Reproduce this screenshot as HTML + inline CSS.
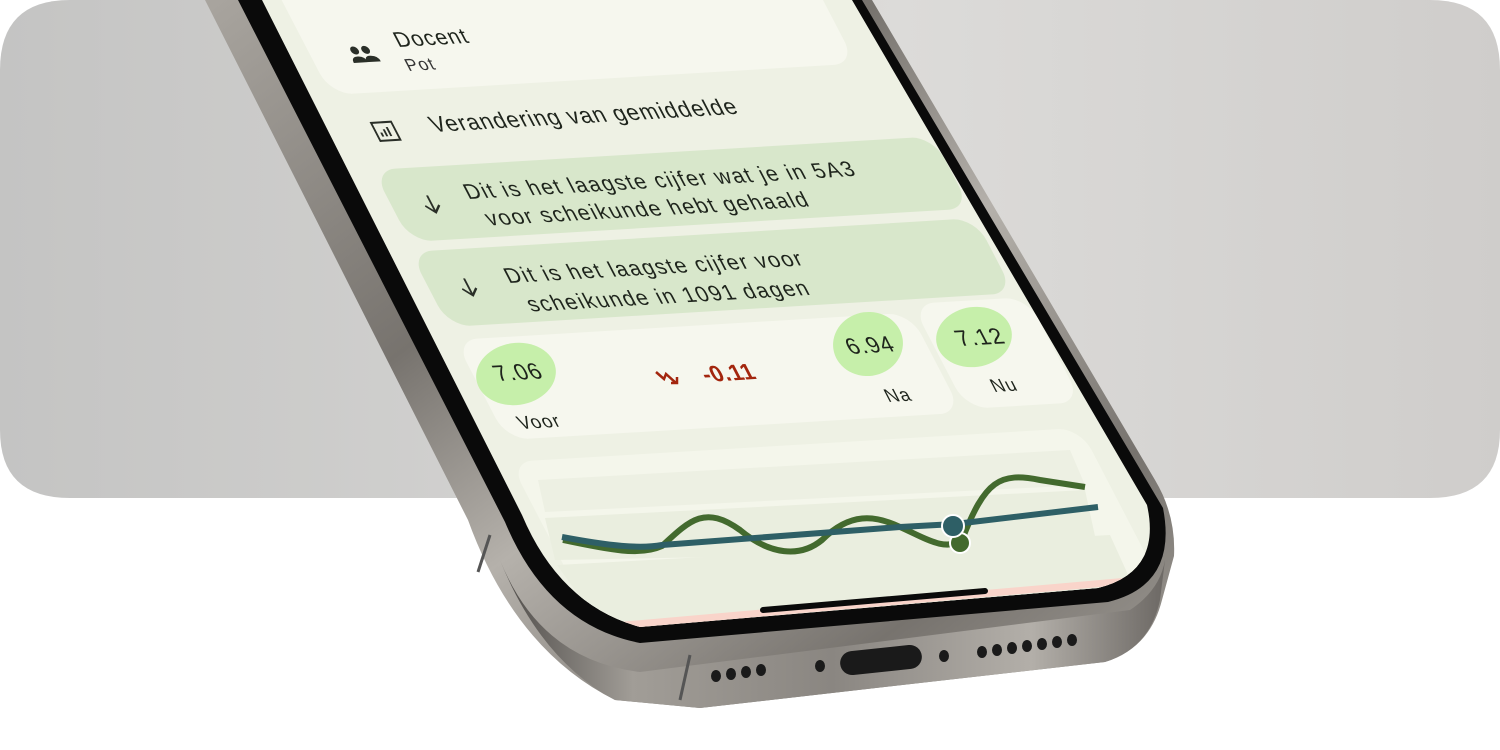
<!DOCTYPE html>
<html><head><meta charset="utf-8"><style>
html,body{margin:0;padding:0;width:1500px;height:750px;overflow:hidden;background:#fff;font-family:"Liberation Sans",sans-serif}
.abs{position:absolute}
#scr{position:absolute;left:0;top:0;width:1500px;height:750px;clip-path:path('M262,0 L522,515 Q560,605 640,627 L1098,588 Q1162,572 1147,505 L852,0 Z')}
.t{position:absolute;transform-origin:0 0;transform:matrix(1,-0.06,0.52,1,0,0)}
.card{border-radius:22px}
.txt{color:#1e241c;white-space:nowrap}
</style></head><body>
<svg class="abs" style="left:0;top:0" width="1500" height="750">
<defs>
<linearGradient id="bg" x1="0" y1="0" x2="1" y2="0"><stop offset="0" stop-color="#c4c4c3"/><stop offset="0.6" stop-color="#dcdbd9"/><stop offset="1" stop-color="#cfcdcb"/></linearGradient>
<linearGradient id="metal" x1="0" y1="0" x2="1" y2="1"><stop offset="0" stop-color="#a9a59f"/><stop offset="0.35" stop-color="#77736e"/><stop offset="0.55" stop-color="#b5b1ab"/><stop offset="0.8" stop-color="#77736e"/><stop offset="1" stop-color="#a19d97"/></linearGradient>
<linearGradient id="bot" x1="0" y1="0" x2="1" y2="0"><stop offset="0" stop-color="#4e4b48"/><stop offset="0.2" stop-color="#a19d97"/><stop offset="0.5" stop-color="#8a8681"/><stop offset="0.8" stop-color="#b3afa9"/><stop offset="1" stop-color="#6c6864"/></linearGradient>
</defs>
<path d="M70,0 L1430,0 Q1500,0 1500,70 L1500,430 Q1500,498 1430,498 L70,498 Q0,498 0,430 L0,70 Q0,0 70,0 Z" fill="url(#bg)"/>
<path d="M205,0 L468,520 Q515,650 615,700 L700,708 L1105,662 Q1150,648 1162,600 L1174,556 Q1176,515 1155,480 L872,0 Z" fill="url(#metal)"/>
<path d="M500,560 Q540,660 640,672 L1130,610 Q1160,590 1165,560 L1160,600 Q1150,648 1105,662 L700,708 L615,700 Q540,660 500,560 Z" fill="url(#bot)"/>
<path d="M238,0 L505,522 Q548,625 640,643 L1108,602 Q1178,585 1163,508 L862,0 Z" fill="#0a0a0a"/>
<path d="M490,535 L478,572" stroke="#555" stroke-width="3"/>
<path d="M690,655 L680,700" stroke="#555" stroke-width="3"/>
<g fill="#1a1a1a">
<ellipse cx="716" cy="676" rx="5" ry="6"/><ellipse cx="731" cy="674" rx="5" ry="6"/><ellipse cx="746" cy="672" rx="5" ry="6"/><ellipse cx="761" cy="670" rx="5" ry="6"/>
<ellipse cx="820" cy="666" rx="5" ry="6"/>
<rect x="840" y="648" width="82" height="24" rx="12" transform="rotate(-6 881 660)"/>
<ellipse cx="944" cy="656" rx="5" ry="6"/>
<ellipse cx="982" cy="652" rx="5" ry="6"/><ellipse cx="997" cy="650" rx="5" ry="6"/><ellipse cx="1012" cy="648" rx="5" ry="6"/><ellipse cx="1027" cy="646" rx="5" ry="6"/><ellipse cx="1042" cy="644" rx="5" ry="6"/><ellipse cx="1057" cy="642" rx="5" ry="6"/><ellipse cx="1072" cy="640" rx="5" ry="6"/>
</g>
</svg>
<div id="scr">
<div class="abs" style="left:0;top:0;width:1500px;height:750px;background:#eef1e4"></div>
<div class="t card" style="left:253px;top:-55px;width:525px;height:150px;background:#f6f7ee"></div>
<svg class="t" style="left:344px;top:46px" width="30" height="22" viewBox="0 0 30 22"><circle cx="8" cy="5" r="4" fill="#2a2f28"/><circle cx="19" cy="5" r="4" fill="#2a2f28"/><path d="M1,17 Q1,11 8,11 Q15,11 15,17 Z M14,17 Q14,11 20,11 Q28,11 28,17 Z" fill="#2a2f28"/></svg>
<div class="t txt" style="left:389px;top:29px;font-size:21px;letter-spacing:1px">Docent</div>
<div class="t txt" style="left:401px;top:56px;font-size:17px;letter-spacing:1px;color:#333">Pot</div>
<svg class="t" style="left:368px;top:121px" width="24" height="22" viewBox="0 0 24 22"><rect x="2" y="2" width="20" height="18" fill="none" stroke="#2a2f28" stroke-width="2"/><path d="M7,16 V12 M11,16 V9 M15,16 V7" stroke="#2a2f28" stroke-width="2"/></svg>
<div class="t txt" style="left:424px;top:112px;font-size:22px;letter-spacing:1px">Verandering van gemiddelde</div>
<div class="t card" style="left:373px;top:170px;width:560px;height:72px;background:#d8e7cb"></div>
<svg class="t" style="left:416px;top:194px" width="20" height="22" viewBox="0 0 20 22"><path d="M10,2 V19 M3,12 L10,19 L17,12" fill="none" stroke="#2a2f28" stroke-width="2"/></svg>
<div class="t txt" style="left:458px;top:179px;font-size:21px;letter-spacing:1.5px;line-height:27px">Dit is het laagste cijfer wat je in 5A3<br>&nbsp;voor scheikunde hebt gehaald</div>
<div class="t card" style="left:410px;top:252px;width:565px;height:75px;background:#d8e7cb"></div>
<svg class="t" style="left:453px;top:277px" width="20" height="22" viewBox="0 0 20 22"><path d="M10,2 V19 M3,12 L10,19 L17,12" fill="none" stroke="#2a2f28" stroke-width="2"/></svg>
<div class="t txt" style="left:498px;top:262px;font-size:21px;letter-spacing:1.5px;line-height:29px">Dit is het laagste cijfer voor<br>&nbsp;scheikunde in 1091 dagen</div>
<div class="t card" style="left:455px;top:340px;width:455px;height:100px;background:#f6f7ee"></div>
<div class="t card" style="left:912px;top:304px;width:115px;height:105px;background:#f6f7ee"></div>
<div class="abs" style="left:476px;top:343px;width:80px;height:62px;border-radius:50%;background:#c6efaa;transform:rotate(-8deg)"></div>
<div class="abs" style="left:833px;top:312px;width:70px;height:64px;border-radius:50%;background:#c6efaa;transform:rotate(-8deg)"></div>
<div class="abs" style="left:936px;top:307px;width:76px;height:60px;border-radius:50%;background:#c6efaa;transform:rotate(-8deg)"></div>
<div class="t txt" style="left:488px;top:361px;font-size:22px;letter-spacing:1px">7.06</div>
<div class="t txt" style="left:840px;top:334px;font-size:22px;letter-spacing:1px">6.94</div>
<div class="t txt" style="left:950px;top:326px;font-size:22px;letter-spacing:1px">7.12</div>
<div class="t txt" style="left:513px;top:413px;font-size:18px;letter-spacing:1.2px">Voor</div>
<div class="t txt" style="left:880px;top:386px;font-size:18px;letter-spacing:1.2px">Na</div>
<div class="t txt" style="left:986px;top:376px;font-size:18px;letter-spacing:1.2px">Nu</div>
<svg class="abs" style="left:654px;top:366px" width="36" height="22"><path d="M2,6 L10,13 L12,8 L22,17 M17,17 H23 V11" fill="none" stroke="#a3260e" stroke-width="2.5"/></svg>
<div class="t txt" style="left:696px;top:362px;font-size:22px;letter-spacing:0.5px;font-weight:bold;color:#a3260e">-0.11</div>
<div class="t card" style="left:510px;top:462px;width:570px;height:260px;background:#f4f6eb"></div>
<svg class="abs" style="left:0;top:0" width="1500" height="750">
<path d="M538,480 L1070,450 L1085,485 L545,512 Z" fill="#edf0e3"/>
<path d="M545,518 L1085,490 L1098,550 L555,560 Z" fill="#eaeedf"/>
<path d="M557,565 L1110,535 L1135,590 L600,625 Z" fill="#eaeedf"/>
<path d="M602,627 L1140,580" stroke="#f9d4ca" stroke-width="7"/>
<path d="M563,540 C610,550 640,556 662,546 C690,520 705,505 740,530 C770,555 800,558 822,540 C850,512 875,515 900,527 C925,538 945,552 962,540 C985,480 1000,472 1040,480 L1085,487" fill="none" stroke="#436a2e" stroke-width="6"/>
<path d="M562,537 C610,546 640,549 662,545 L900,527 L955,524 L1098,507" fill="none" stroke="#2e5f66" stroke-width="6"/>
<circle cx="960" cy="543" r="10" fill="#436a2e" stroke="#fff" stroke-width="2"/>
<circle cx="953" cy="526" r="11" fill="#2e5f66" stroke="#fff" stroke-width="2"/>
<path d="M763,610 L985,591" stroke="#0a0a0a" stroke-width="6" stroke-linecap="round"/>
</svg>
</div>
</body></html>
